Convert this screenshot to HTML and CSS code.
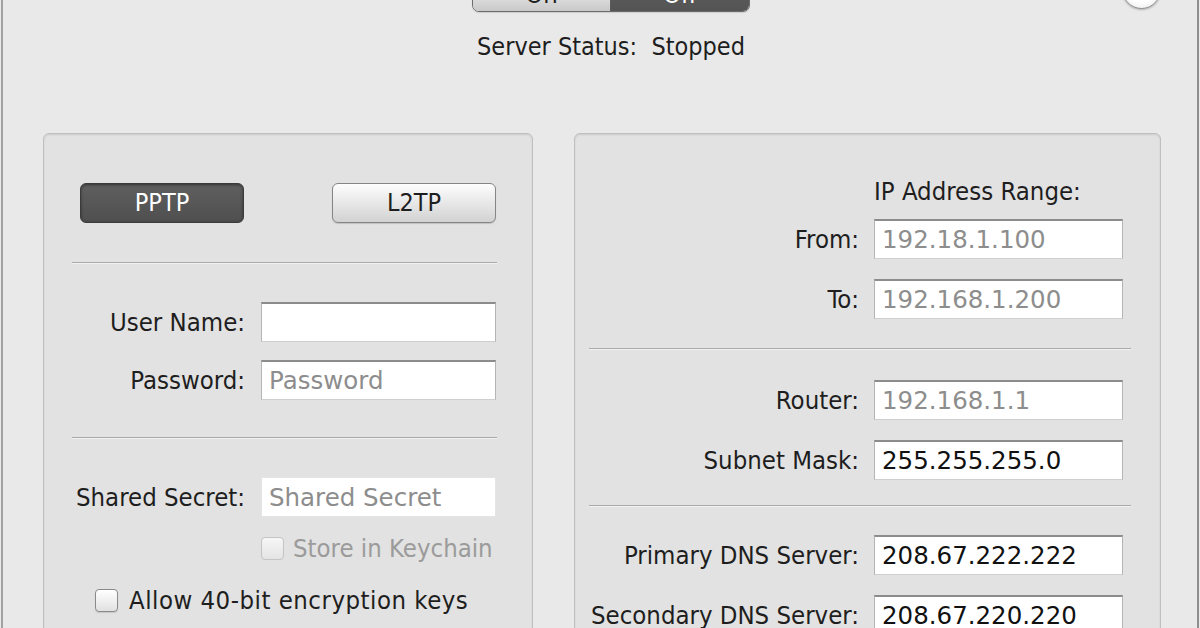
FILE: index.html
```html
<!DOCTYPE html>
<html>
<head>
<meta charset="utf-8">
<link rel="stylesheet" href="styles.css">
</head>
<body>
<div class="window">
  <div class="top">
    <div class="spacer"></div>
    <div class="center">
      <div class="segmented">
        <div class="seg seg-on">On</div>
        <div class="seg seg-off">Off</div>
      </div>
      <div class="status">Server Status:&nbsp; Stopped</div>
    </div>
    <div class="help-col"><div class="help">?</div></div>
  </div>

  <div class="panels">
    <div class="panel panel-left">
      <div class="proto-row">
        <div class="btn btn-dark">PPTP</div>
        <div class="btn btn-light">L2TP</div>
      </div>
      <div class="sep sep-a"></div>
      <div class="form form-left">
        <label class="lbl">User Name:</label>
        <div class="field"></div>
        <label class="lbl">Password:</label>
        <div class="field placeholder">Password</div>
      </div>
      <div class="sep sep-b"></div>
      <div class="form form-left form-secret">
        <label class="lbl">Shared Secret:</label>
        <div class="field field-soft placeholder">Shared Secret</div>
        <div class="check check-disabled col2"><span class="box"></span><span>Store in Keychain</span></div>
      </div>
      <div class="check check-allow"><span class="box"></span><span class="allow-text">Allow 40-bit encryption keys</span></div>
    </div>

    <div class="panel panel-right">
      <div class="form form-right">
        <div class="range-title col2">IP Address Range:</div>
        <label class="lbl">From:</label>
        <div class="field placeholder">192.18.1.100</div>
        <label class="lbl">To:</label>
        <div class="field placeholder">192.168.1.200</div>
      </div>
      <div class="sep sep-c"></div>
      <div class="form form-right form-router">
        <label class="lbl">Router:</label>
        <div class="field placeholder">192.168.1.1</div>
        <label class="lbl">Subnet Mask:</label>
        <div class="field">255.255.255.0</div>
      </div>
      <div class="sep sep-d"></div>
      <div class="form form-right form-dns">
        <label class="lbl">Primary DNS Server:</label>
        <div class="field">208.67.222.222</div>
        <label class="lbl">Secondary DNS Server:</label>
        <div class="field">208.67.220.220</div>
      </div>
    </div>
  </div>
</div>
</body>
</html>
```

FILE: styles.css
```css
* { box-sizing: border-box; }
html, body {
  margin: 0;
  padding: 0;
  width: 1200px;
  height: 628px;
  overflow: hidden;
  background: #e9e9e9;
}
body {
  font-family: "DejaVu Sans", sans-serif;
  font-stretch: 87.5%;
  font-size: 25.5px;
  color: #1e1e1e;
}
.window {
  margin-left: 1px;
  width: 1198px;
  height: 628px;
  border-left: 2px solid #a2a2a2;
  border-right: 2px solid #8f8f8f;
  background: #e9e9e9;
  overflow: hidden;
}

/* top */
.top {
  display: grid;
  grid-template-columns: 1fr auto 1fr;
  padding-left: 22px;
}
.center {
  display: flex;
  flex-direction: column;
  align-items: center;
}
.segmented {
  margin-top: -19px;
  height: 31px;
  display: flex;
  border: 1px solid #6b6b6b;
  border-radius: 7px;
  overflow: hidden;
  box-shadow: 0 1px 1px rgba(0,0,0,0.12);
}
.seg {
  width: 138px;
  line-height: 24px;
  text-align: center;
}
.seg-on {
  background: linear-gradient(#f4f4f4, #c9c9c9);
  color: #1e1e1e;
  border-right: 1px solid #5a5a5a;
}
.seg-off {
  background: linear-gradient(#5d5d5d, #545454);
  color: #fff;
}
.status {
  margin-top: 20px;
  line-height: 30px;
  white-space: pre;
  font-size: 25px;
}
.help-col {
  display: flex;
  justify-content: flex-end;
  align-items: flex-start;
}
.help {
  margin-top: -30px;
  margin-right: 36px;
  width: 39px;
  height: 39px;
  border-radius: 50%;
  border: 1px solid #8a8a8a;
  background: radial-gradient(circle at 50% 40%, #ffffff 55%, #e4e4e4 100%);
  box-shadow: 0 1px 2px rgba(0,0,0,0.25);
  color: #555;
  text-align: center;
  line-height: 37px;
  font-size: 24px;
}

/* panels */
.panels {
  display: grid;
  grid-template-columns: 490px 587px;
  column-gap: 41px;
  padding-left: 40px;
  margin-top: 71px;
}
.panel {
  height: 600px;
  background: #e2e2e2;
  border: 1px solid #bfbfbf;
  border-radius: 6px;
  box-shadow: inset 0 1px 2px rgba(0,0,0,0.10);
}
.panel-left {
  padding: 49px 36px 0 28px;
}
.proto-row {
  display: flex;
  justify-content: space-between;
  margin-left: 8px;
}
.btn {
  width: 164px;
  height: 40px;
  border-radius: 6px;
  text-align: center;
  line-height: 38px;
  font-size: 25px;
}
.btn-dark {
  background: linear-gradient(#5f5f5f, #4f4f4f);
  border: 1px solid #3b3b3b;
  color: #fff;
  box-shadow: inset 0 1px 3px rgba(0,0,0,0.45);
}
.btn-light {
  background: linear-gradient(#fdfdfd, #d2d2d2);
  border: 1px solid #858585;
  color: #1e1e1e;
  box-shadow: 0 1px 1px rgba(0,0,0,0.15);
}
.sep {
  height: 2px;
  border-top: 1px solid #a9a9a9;
  border-bottom: 1px solid #f2f2f2;
}
.sep-a { margin-top: 39px; margin-right: -1px; }
.sep-b { margin-top: 37px; margin-right: -1px; }

.form {
  display: grid;
  align-items: center;
  column-gap: 16px;
}
.form-left {
  grid-template-columns: 1fr 235px;
  row-gap: 18px;
  margin-top: 38px;
}
.form-secret { row-gap: 16px; }
.lbl {
  text-align: right;
  line-height: 30px;
  white-space: nowrap;
}
.col2 { grid-column: 2; }
.field {
  height: 40px;
  background: #fff;
  border: 1px solid #b4b4b4;
  border-top: 2px solid #8c8c8c;
  border-bottom-color: #cfcfcf;
  padding-left: 7px;
  line-height: 37px;
  font-size: 24.5px;
  font-stretch: 100%;
  color: #111;
  white-space: nowrap;
  overflow: hidden;
}
.field-soft {
  border: 1px solid #e4e4e4;
  line-height: 39px;
}
.placeholder { color: #8d8d8d; }

.check {
  display: flex;
  align-items: center;
  line-height: 30px;
  white-space: nowrap;
}
.box {
  width: 23px;
  height: 23px;
  border: 1px solid #8a8a8a;
  border-radius: 4px;
  background: linear-gradient(#ffffff, #e1e1e1);
  box-shadow: 0 1px 1px rgba(0,0,0,0.12);
  margin-right: 11px;
  flex: none;
}
.check-disabled { color: #9b9b9b; }
.check-disabled .box {
  border-color: #c4c4c4;
  background: linear-gradient(#f6f6f6, #e4e4e4);
  box-shadow: none;
  margin-right: 9px;
}
.check-allow {
  margin-top: 22px;
  margin-left: 23px;
}
.allow-text { letter-spacing: 0.5px; }

.panel-right {
  padding: 39px 37px 0 14px;
}
.form-right {
  grid-template-columns: 1fr 249px;
  column-gap: 15px;
  row-gap: 20px;
}
.range-title {
  line-height: 30px;
  margin-top: 3px;
  margin-bottom: -7px;
  white-space: nowrap;
}
.sep-c { margin-top: 29px; margin-right: -8px; }
.form-router { margin-top: 30px; }
.sep-d { margin-top: 25px; margin-right: -8px; }
.form-dns { margin-top: 28px; }
```
